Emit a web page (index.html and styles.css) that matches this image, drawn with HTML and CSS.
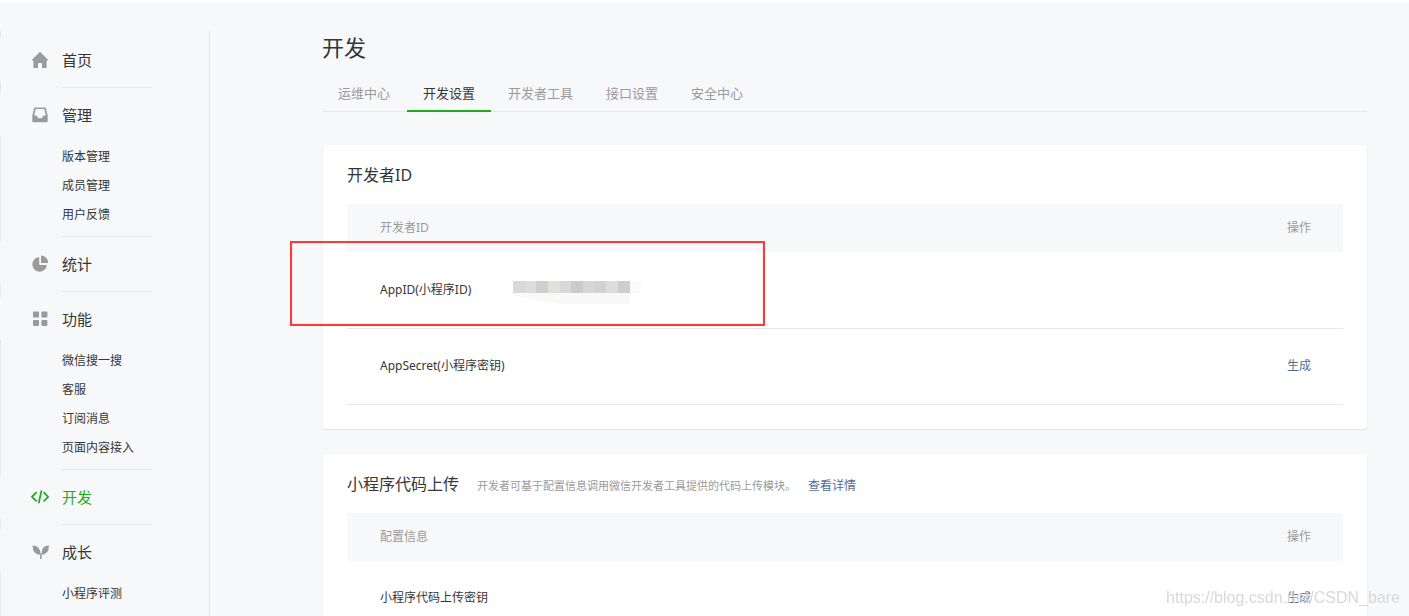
FILE: index.html
```html
<!DOCTYPE html>
<html lang="zh-CN">
<head>
<meta charset="utf-8">
<title>开发设置</title>
<link rel="stylesheet" href="styles.css">
</head>
<body>
<div class="layout">
  <nav class="sidebar" aria-label="主导航">
    <section class="group">
      <a class="item" href="#"><svg class="icon" viewBox="0 0 18 18"><path fill="currentColor" d="M9 .8 17.6 9.6H15.6V16.4Q15.6 17 15 17H11V12.6Q11 12 10.4 12H7.6Q7 12 7 12.6V17H3Q2.4 17 2.4 16.4V9.6H.4Z"/></svg>首页</a>
    </section>
    <section class="group">
      <a class="item" href="#"><svg class="icon" viewBox="0 0 18 18"><path fill="currentColor" fill-rule="evenodd" d="M4.3 1.5H13.7Q14.6 1.5 14.9 2.4L16.7 9.4V15.2Q16.7 16.3 15.6 16.3H2.4Q1.3 16.3 1.3 15.2V9.4L3.1 2.4Q3.4 1.5 4.3 1.5ZM4.8 3 3.1 9.4H5.6Q6.2 12.2 9 12.2T12.4 9.4H14.9L13.2 3Z"/></svg>管理</a>
      <ul class="sub">
        <li><a href="#">版本管理</a></li>
        <li><a href="#">成员管理</a></li>
        <li><a href="#">用户反馈</a></li>
      </ul>
    </section>
    <section class="group">
      <a class="item" href="#"><svg class="icon" viewBox="0 0 18 18"><path fill="currentColor" d="M8.2 2.1A7.3 7.3 0 1 0 15.9 9.9H9.2Q8.2 9.9 8.2 8.9ZM10 .6A7.2 7.2 0 0 1 17.2 8.1H10.8Q10 8.1 10 7.3Z"/></svg>统计</a>
    </section>
    <section class="group">
      <a class="item" href="#"><svg class="icon" viewBox="0 0 18 18"><g fill="currentColor"><rect x="2" y="1.5" width="6" height="6" rx=".8"/><rect x="10.4" y="1.5" width="6" height="6" rx=".8"/><rect x="2" y="9.9" width="6" height="6" rx=".8"/><rect x="10.4" y="9.9" width="6" height="6" rx=".8"/></g></svg>功能</a>
      <ul class="sub">
        <li><a href="#">微信搜一搜</a></li>
        <li><a href="#">客服</a></li>
        <li><a href="#">订阅消息</a></li>
        <li><a href="#">页面内容接入</a></li>
      </ul>
    </section>
    <section class="group">
      <a class="item active" href="#" aria-current="page"><svg class="icon" viewBox="0 0 18 18"><path fill="none" stroke="currentColor" stroke-width="1.7" d="M5.6 4.2 1 8.8 5.6 13.4M12.6 4.2 17.2 8.8 12.6 13.4M10.5 2.4 7.7 15.2"/></svg>开发</a>
    </section>
    <section class="group">
      <a class="item" href="#"><svg class="icon" viewBox="0 0 18 18"><path fill="currentColor" d="M1.6 2.6Q9.6 2.8 9.4 11.8Q1.4 11.6 1.6 2.6ZM17.9 2.6Q10.2 2.8 10.4 11.8Q18.1 11.6 17.9 2.6ZM9.1 10.6H10.7V16H9.1Z"/></svg>成长</a>
      <ul class="sub">
        <li><a href="#">小程序评测</a></li>
      </ul>
    </section>
  </nav>

  <main class="main">
    <h1 class="title">开发</h1>
    <nav class="tabs" aria-label="开发">
      <a class="tab" href="#">运维中心</a>
      <a class="tab current" href="#" aria-current="page">开发设置</a>
      <a class="tab" href="#">开发者工具</a>
      <a class="tab" href="#">接口设置</a>
      <a class="tab" href="#">安全中心</a>
    </nav>

    <section class="card">
      <h2 class="heading">开发者ID</h2>
      <table class="table">
        <thead><tr><th class="name">开发者ID</th><th></th><th class="action">操作</th></tr></thead>
        <tbody>
          <tr>
            <td class="name">AppID(小程序ID)</td>
            <td><svg class="mosaic" viewBox="0 0 128 24" role="img" aria-label="已隐藏"><path fill="#f9f9f9" d="M0 12H117V23H48Q22 20 0 14Z"/><path fill="#dad9d8" d="M0 0h12v12H0z"/><path fill="#dadcdf" d="M12 0h11v12H12z"/><path fill="#cfcfcf" d="M23 0h12v12H23z"/><path fill="#dfe0dc" d="M35 0h12v12H35z"/><path fill="#d6d8da" d="M47 0h11v12H47z"/><path fill="#cacaca" d="M58 0h12v12H58z"/><path fill="#d6d6d6" d="M70 0h12v12H70z"/><path fill="#d2d2d2" d="M82 0h11v12H82z"/><path fill="#dcdcde" d="M93 0h12v12H93z"/><path fill="#d0cecc" d="M105 0h12v12h-12z"/><path fill="#f9fafc" d="M117 0h11v12h-11z"/></svg></td>
            <td class="action"></td>
          </tr>
          <tr>
            <td class="name">AppSecret(小程序密钥)</td>
            <td></td>
            <td class="action"><a class="link" href="#">生成</a></td>
          </tr>
        </tbody>
      </table>
      <div class="highlight"></div>
    </section>

    <section class="card">
      <div class="heading-row">
        <h2 class="heading">小程序代码上传</h2>
        <p class="desc">开发者可基于配置信息调用微信开发者工具提供的代码上传模块。</p>
        <a class="link" href="#">查看详情</a>
      </div>
      <table class="table">
        <thead><tr><th class="name">配置信息</th><th></th><th class="action">操作</th></tr></thead>
        <tbody>
          <tr>
            <td class="name">小程序代码上传密钥</td>
            <td></td>
            <td class="action"><a class="link" href="#">生成</a></td>
          </tr>
        </tbody>
      </table>
    </section>
  </main>
</div>
<div class="watermark">https://blog.csdn.net/CSDN_bare</div>
</body>
</html>
```

FILE: styles.css
```css
* { box-sizing: border-box; }

html { scrollbar-width: none; }

body {
  margin: 0;
  border-top: 2px solid #fff;
  background: #f7f8fa;
  color: #353535;
  font: 12px/20px "Noto Sans", "Noto Sans CJK SC", sans-serif;
}

a { color: inherit; text-decoration: none; }
h1, h2, p, ul { margin: 0; padding: 0; font-weight: 400; }
ul { list-style: none; }

.layout { display: flex; padding-top: 29px; }

/* Sidebar */
.sidebar {
  flex: 0 0 210px;
  padding-top: 7px;
  border-left: 1px solid #e7e8eb;
  border-right: 1px solid #e4e5e8;
}
.group::after {
  content: "";
  display: block;
  width: 90px;
  height: 1px;
  margin: 6px 0 5px 61px;
  background: #e7e8eb;
}
.group:last-child::after { display: none; }
.item {
  display: flex;
  align-items: center;
  gap: 13px;
  height: 43px;
  margin-left: -1px;
  padding-left: 31px;
  background: #f7f8fa;
  font-size: 15px;
}
.icon { width: 18px; height: 18px; color: #9a9a9a; }
.active, .active .icon { color: #1aad19; }
.sub { padding: 6px 0 1px 61px; }
.sub a { display: block; line-height: 29px; }

/* Content */
.main { flex: 1; min-width: 0; padding: 0 42px 40px 113px; }
.title { font-size: 22px; line-height: 32px; margin-bottom: 14px; margin-left: -1px; }
.tabs {
  display: flex;
  gap: 1px;
  margin-bottom: 33px;
  border-bottom: 1px solid #e7e8eb;
}
.tab {
  margin-bottom: -1px;
  padding: 0 16px;
  border-bottom: 2px solid transparent;
  color: #9a9a9a;
  font-size: 13px;
  line-height: 33px;
}
.tab.current { border-color: #1aad19; color: #353535; }
.tab:first-child { margin-left: -1px; }

.card {
  position: relative;
  margin-bottom: 25px;
  padding: 15px 24px 24px;
  border-radius: 3px;
  background: #fff;
  box-shadow: 0 1px 2px rgba(0, 0, 0, 0.1);
}
.heading { font-size: 16px; line-height: 30px; margin-bottom: 14px; }
.heading-row { display: flex; align-items: baseline; }
.desc { margin: 0 12px 0 18px; color: #9a9a9a; font-size: 11px; }
.link { color: #576b95; }

.table { width: 100%; border-collapse: collapse; table-layout: fixed; }
.table th {
  height: 48px;
  padding: 0;
  background: #f7f8fa;
  color: #9a9a9a;
  font-weight: 400;
  text-align: left;
}
.table td { height: 76px; padding: 0; border-bottom: 1px solid #e7e8eb; }
.table .name { width: 166px; padding-left: 33px; white-space: nowrap; }
.table .action { width: 120px; padding-right: 32px; text-align: right; }
.mosaic { display: block; width: 128px; height: 24px; margin-top: 6px; }

.highlight {
  position: absolute;
  top: 96px;
  left: -33px;
  width: 475px;
  height: 85px;
  border: 2px solid #fb3b3a;
  box-shadow: inset 0 0 1px #fb3b3a;
  pointer-events: none;
}

.watermark {
  position: fixed;
  right: 9px;
  bottom: 8px;
  color: rgba(190, 190, 190, 0.6);
  font-family: "Liberation Sans", sans-serif;
  font-size: 16px;
  text-shadow: 0 0 1px #fff;
  pointer-events: none;
}
```
